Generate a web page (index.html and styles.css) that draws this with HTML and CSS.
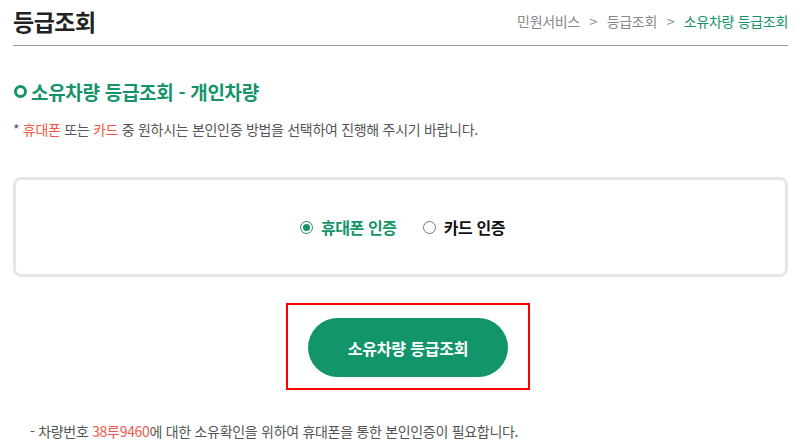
FILE: index.html
```html
<!DOCTYPE html>
<html lang="ko">
<head>
<meta charset="utf-8">
<link rel="stylesheet" href="styles.css">
</head>
<body>
<div class="page">
  <div class="head">
    <h1 class="title">등급조회</h1>
    <div class="crumb">민원서비스 <span class="sep">&gt;</span> 등급조회 <span class="sep">&gt;</span> <span class="cur">소유차량 등급조회</span></div>
  </div>
  <h2 class="sec"><span class="dot"></span>소유차량 등급조회 - 개인차량</h2>
  <p class="note">* <span class="red">휴대폰</span> 또는 <span class="red">카드</span> 중 원하시는 본인인증 방법을 선택하여 진행해 주시기 바랍니다.</p>
  <div class="box">
    <label class="opt on"><span class="radio"></span>휴대폰 인증</label>
    <label class="opt"><span class="radio"></span>카드 인증</label>
  </div>
  <div class="btnrow">
    <div class="focus"><button class="btn">소유차량 등급조회</button></div>
  </div>
  <p class="foot">- 차량번호 <span class="red">38루9460</span>에 대한 소유확인을 위하여 휴대폰을 통한 본인인증이 필요합니다.</p>
</div>
</body>
</html>
```
FILE: styles.css
```css
* { box-sizing: border-box; }
body {
  margin: 0;
  background: #fff;
  font-family: "Noto Sans CJK KR", "Noto Sans", sans-serif;
  color: #333;
}
.page { padding: 0 12px 0 13px; }
.head {
  display: flex;
  justify-content: space-between;
  align-items: center;
  height: 46px;
  border-bottom: 1px solid #9a9a9a;
  padding-bottom: 4px;
}
.title {
  margin: 0;
  font-size: 23px;
  font-weight: 700;
  color: #222;
  letter-spacing: -0.5px;
}
.crumb {
  font-size: 14px;
  color: #888;
  letter-spacing: -0.3px;
}
.crumb .sep { margin: 0 6px; }
.crumb .cur { color: #15936a; }
.sec {
  margin: 32px 0 0 1px;
  display: flex;
  align-items: center;
  font-size: 19px;
  font-weight: 700;
  color: #15936a;
  letter-spacing: -0.3px;
  height: 26px;
}
.dot {
  width: 13px;
  height: 13px;
  border: 3px solid #15936a;
  border-radius: 50%;
  margin-right: 4px;
}
.note {
  margin: 15px 0 0 0;
  font-size: 14px;
  color: #555;
  letter-spacing: -0.3px;
}
.red { color: #f2584a; }
.box {
  margin-top: 38px;
  height: 100px;
  border: 3px solid #e6e6e6;
  border-radius: 8px;
  display: flex;
  justify-content: center;
  align-items: center;
  gap: 26px;
  padding-left: 4px;
}
.opt {
  display: flex;
  align-items: center;
  font-size: 16px;
  font-weight: 700;
  color: #111;
  letter-spacing: -0.4px;
}
.opt.on { color: #15936a; }
.radio {
  width: 13px;
  height: 13px;
  border: 1px solid #777;
  border-radius: 50%;
  margin-right: 8px;
  position: relative;
}
.opt.on .radio { border-color: #15936a; }
.opt.on .radio::after {
  content: "";
  position: absolute;
  left: 2px;
  top: 2px;
  width: 7px;
  height: 7px;
  border-radius: 50%;
  background: #15936a;
}
.btnrow {
  display: flex;
  justify-content: center;
  margin-top: 26px;
  padding-left: 15px;
}
.focus {
  border: 2px solid #ff0000;
  padding: 13px 20px 11px 20px;
}
.btn {
  width: 200px;
  height: 59px;
  border: 0;
  border-radius: 30px;
  background: #13956b;
  color: #fff;
  font-family: inherit;
  font-size: 16px;
  font-weight: 700;
  letter-spacing: -0.2px;
}
.foot {
  margin: 31px 0 0 17px;
  font-size: 14px;
  color: #555;
  letter-spacing: -0.3px;
}
```
